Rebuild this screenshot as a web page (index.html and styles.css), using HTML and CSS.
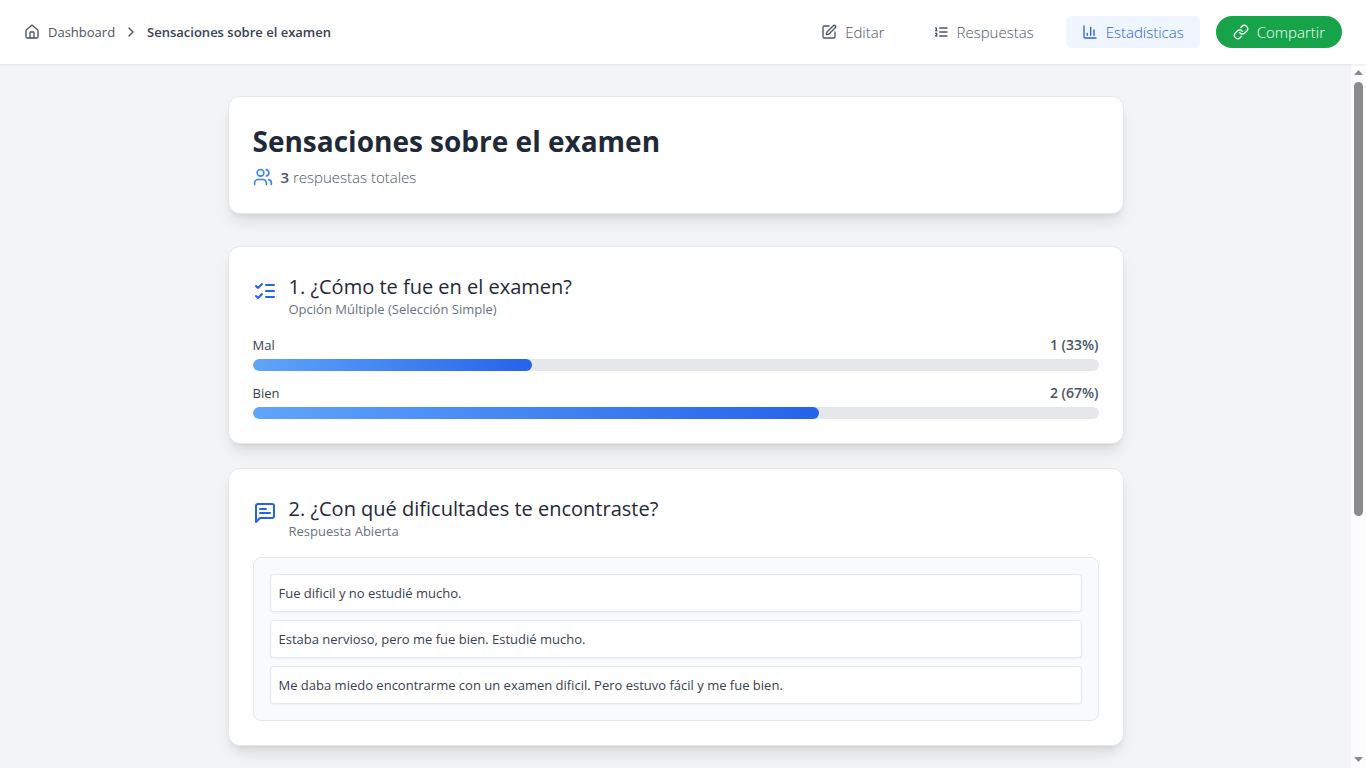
FILE: index.html
```html
<!DOCTYPE html>
<html lang="es">
<head>
<meta charset="utf-8">
<meta name="viewport" content="width=device-width, initial-scale=1">
<title>Sensaciones sobre el examen</title>
<link rel="stylesheet" href="styles.css">
</head>
<body>
<header class="topbar">
  <nav class="crumbs" aria-label="Ruta">
    <a class="crumb-link" href="#dashboard">
      <svg class="icon" viewBox="0 0 24 24"><path d="M15 21v-8a1 1 0 0 0-1-1h-4a1 1 0 0 0-1 1v8"/><path d="M3 10a2 2 0 0 1 .709-1.528l7-6a2 2 0 0 1 2.582 0l7 6A2 2 0 0 1 21 10v9a2 2 0 0 1-2 2H5a2 2 0 0 1-2-2z"/></svg>
      <span>Dashboard</span>
    </a>
    <svg class="icon" viewBox="0 0 24 24"><path d="m9 18 6-6-6-6"/></svg>
    <span class="crumb-current">Sensaciones sobre el examen</span>
  </nav>
  <nav class="actions" aria-label="Formulario">
    <a class="tab" href="#editar">
      <svg class="icon" viewBox="0 0 24 24"><path d="M12 3H5a2 2 0 0 0-2 2v14a2 2 0 0 0 2 2h14a2 2 0 0 0 2-2v-7"/><path d="M18.375 2.625a1 1 0 0 1 3 3l-9.013 9.014a2 2 0 0 1-.853.505l-2.873.84a.5.5 0 0 1-.62-.62l.84-2.873a2 2 0 0 1 .506-.852z"/></svg>
      <span>Editar</span>
    </a>
    <a class="tab" href="#respuestas">
      <svg class="icon" viewBox="0 0 24 24"><path d="M10 12h11"/><path d="M10 18h11"/><path d="M10 6h11"/><path d="M4 10h2"/><path d="M4 6h1v4"/><path d="M6 18H4c0-1 2-2 2-3s-1-1.5-2-1"/></svg>
      <span>Respuestas</span>
    </a>
    <a class="tab tab-active" href="#estadisticas" aria-current="page">
      <svg class="icon" viewBox="0 0 24 24"><path d="M3 3v16a2 2 0 0 0 2 2h16"/><path d="M18 17V9"/><path d="M13 17V5"/><path d="M8 17v-3"/></svg>
      <span>Estadísticas</span>
    </a>
    <button class="share" type="button">
      <svg class="icon" viewBox="0 0 24 24"><path d="M10 13a5 5 0 0 0 7.54.54l3-3a5 5 0 0 0-7.07-7.07l-1.72 1.71"/><path d="M14 11a5 5 0 0 0-7.54-.54l-3 3a5 5 0 0 0 7.07 7.07l1.71-1.71"/></svg>
      <span>Compartir</span>
    </button>
  </nav>
</header>
<div class="viewport">
  <main class="page">
    <div class="column">
      <section class="card summary">
        <h1 class="title">Sensaciones sobre el examen</h1>
        <p class="total">
          <svg class="icon icon-users" viewBox="0 0 24 24"><path d="M16 21v-2a4 4 0 0 0-4-4H6a4 4 0 0 0-4 4v2"/><circle cx="9" cy="7" r="4"/><path d="M22 21v-2a4 4 0 0 0-3-3.87"/><path d="M16 3.13a4 4 0 0 1 0 7.75"/></svg>
          <span><strong class="count">3</strong> respuestas totales</span>
        </p>
      </section>
      <section class="card">
        <div class="question">
          <svg class="icon icon-question" viewBox="0 0 24 24"><path d="m3 17 2 2 4-4"/><path d="m3 7 2 2 4-4"/><path d="M13 6h8"/><path d="M13 12h8"/><path d="M13 18h8"/></svg>
          <div>
            <h2 class="question-title">1. ¿Cómo te fue en el examen?</h2>
            <p class="question-type">Opción Múltiple (Selección Simple)</p>
          </div>
        </div>
        <ul class="options">
          <li>
            <div class="option-head"><span>Mal</span><span class="option-count">1 (33%)</span></div>
            <div class="track"><div class="fill" style="width: 33%"></div></div>
          </li>
          <li>
            <div class="option-head"><span>Bien</span><span class="option-count">2 (67%)</span></div>
            <div class="track"><div class="fill" style="width: 67%"></div></div>
          </li>
        </ul>
      </section>
      <section class="card">
        <div class="question">
          <svg class="icon icon-question" viewBox="0 0 24 24"><path d="M21 15a2 2 0 0 1-2 2H7l-4 4V5a2 2 0 0 1 2-2h14a2 2 0 0 1 2 2z"/><path d="M13 8H7"/><path d="M17 12H7"/></svg>
          <div>
            <h2 class="question-title">2. ¿Con qué dificultades te encontraste?</h2>
            <p class="question-type">Respuesta Abierta</p>
          </div>
        </div>
        <ul class="answers">
          <li class="answer">Fue dificil y no estudié mucho.</li>
          <li class="answer">Estaba nervioso, pero me fue bien. Estudié mucho.</li>
          <li class="answer">Me daba miedo encontrarme con un examen dificil. Pero estuvo fácil y me fue bien.</li>
        </ul>
      </section>
    </div>
  </main>
  <div class="scrollbar" aria-hidden="true">
    <svg class="scroll-arrow" viewBox="0 0 9 5"><path d="M0 5 4.5 0 9 5z"/></svg>
    <div class="scroll-rail"><div class="scroll-thumb"></div></div>
    <svg class="scroll-arrow" viewBox="0 0 9 5"><path d="M0 0h9L4.5 5z"/></svg>
  </div>
</div>
</body>
</html>
```
FILE: styles.css
```css
*, *::before, *::after { box-sizing: border-box; }

body {
  margin: 0;
  height: 100vh;
  display: flex;
  flex-direction: column;
  overflow: hidden;
  background: #f3f4f6;
  color: #1f2937;
  font-family: "Open Sans", "Noto Sans", sans-serif;
  font-size: 13px;
  line-height: 20px;
}

h1, h2, p, ul { margin: 0; padding: 0; }
ul { list-style: none; }
a { color: inherit; text-decoration: none; }

.icon {
  flex: none;
  width: 16px;
  height: 16px;
  fill: none;
  stroke: currentColor;
  stroke-width: 2;
  stroke-linecap: round;
  stroke-linejoin: round;
}

.topbar {
  position: relative;
  flex: none;
  display: flex;
  align-items: center;
  justify-content: space-between;
  height: 64px;
  padding: 0 24px;
  background: #fff;
  box-shadow: 0 1px 2px rgba(0, 0, 0, 0.08);
}

.crumbs, .crumb-link, .actions, .tab, .share, .total { display: flex; align-items: center; }
.crumbs, .crumb-link { gap: 8px; }
.crumbs { color: #4b5563; }
.crumb-current { color: #374151; font-weight: 600; }

.actions { gap: 16px; }
.tab, .share {
  gap: 8px;
  padding: 4px 16px;
  border: 0;
  border-radius: 6px;
  background: none;
  color: #4b5563;
  font-family: inherit;
  font-size: 15px;
  font-weight: 300;
  line-height: 24px;
}
.tab-active { background: #eff6ff; color: #2563eb; }
.share { padding: 4px 17px; border-radius: 16px; background: #16a34a; color: #fff; }

.viewport { flex: 1; display: flex; min-height: 0; }
.page { flex: 1; min-width: 0; overflow: hidden; padding: 32px 24px; }
.column { max-width: 896px; margin: 0 auto; }

.card {
  margin-bottom: 24px;
  padding: 24px;
  border: 1px solid #e5e7eb;
  border-radius: 12px;
  background: #fff;
  box-shadow: 0 10px 15px -3px rgba(0, 0, 0, 0.1), 0 4px 6px -4px rgba(0, 0, 0, 0.1);
}
.summary { margin-bottom: 32px; }

.title { padding-top: 4px; font-size: 28px; font-weight: 700; line-height: 32px; }
.total { gap: 8px; margin-top: 8px; color: #4b5563; font-size: 15px; font-weight: 300; line-height: 24px; }
.count { font-weight: 600; }
.icon-users { width: 20px; height: 20px; color: #3b82f6; }

.question { display: flex; align-items: flex-start; gap: 12px; margin-bottom: 16px; }
.icon-question { width: 24px; height: 24px; margin-top: 8px; color: #2563eb; }
.question-title { padding-top: 4px; font-size: 20px; font-weight: 500; line-height: 24px; }
.question-type { color: #6b7280; }

.options { display: grid; gap: 12px; }
.option-head { display: flex; justify-content: space-between; margin-bottom: 4px; color: #374151; }
.option-count { color: #4b5563; font-size: 14px; font-weight: 600; }
.track { height: 12px; border-radius: 6px; background: #e5e7eb; overflow: hidden; }
.fill { height: 100%; border-radius: 6px; background: linear-gradient(to right, #60a5fa, #2563eb); }

.answers {
  display: grid;
  gap: 8px;
  padding: 16px;
  border: 1px solid #e5e7eb;
  border-radius: 8px;
  background: #f9fafb;
}
.answer {
  padding: 8px;
  border: 1px solid #e5e7eb;
  border-radius: 4px;
  background: #fff;
  color: #374151;
  box-shadow: 0 1px 2px rgba(0, 0, 0, 0.05);
}

.scrollbar {
  flex: none;
  display: flex;
  flex-direction: column;
  align-items: center;
  gap: 7px;
  width: 15px;
  padding: 6px 0;
  background: #fcfcfc;
}
.scroll-arrow { width: 9px; height: 5px; fill: #8b8b8b; }
.scroll-rail { flex: 1; width: 9px; }
.scroll-thumb { height: 65%; border-radius: 5px; background: #8b8b8b; }
```
